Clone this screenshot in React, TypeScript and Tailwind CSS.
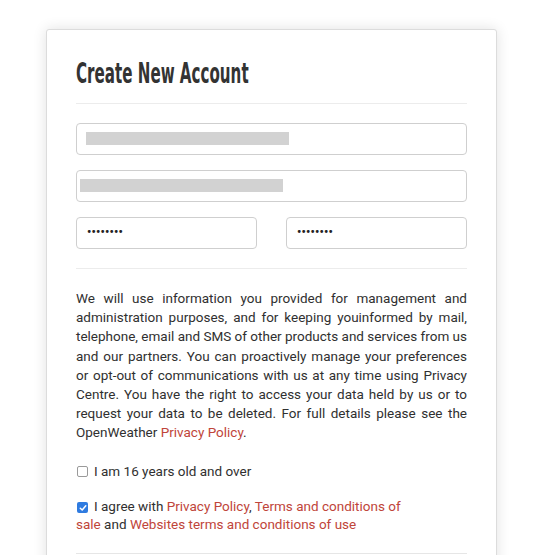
import React from "react";

const Field: React.FC<{ bar?: string; dots?: boolean }> = ({ bar, dots }) => {
  return (
    <div className="relative h-[32px] rounded-[4px] border border-[#cfcfcf] bg-white">
      {bar && <div className={`absolute top-[8px] h-[13px] bg-[#d2d2d2] ${bar}`} />}
      {dots && (
        <span className="absolute left-[10px] top-[5px] text-[12px] font-bold tracking-[0.2px] text-[#222]">
          ••••••••
        </span>
      )}
    </div>
  );
};

const Link: React.FC<{ children: React.ReactNode }> = ({ children }) => (
  <a className="text-[#c0453a]">{children}</a>
);

const lines = [
  "We will use information you provided for management and",
  "administration purposes, and for keeping youinformed by mail,",
  "telephone, email and SMS of other products and services from us",
  "and our partners. You can proactively manage your preferences",
  "or opt-out of communications with us at any time using Privacy",
  "Centre. You have the right to access your data held by us or to",
  "request your data to be deleted. For full details please see the",
];

export default function App() {
  return (
    <div className="min-h-[555px] bg-white pt-[29px] overflow-hidden">
      <div
        className="mx-[46px] w-[451px] h-[540px] rounded-t-[3px] border border-[#dcdcdc] bg-white px-[29px] pt-[28px] shadow-[0_0_14px_rgba(0,0,0,0.12)]"
        style={{ fontFamily: "Roboto, 'Liberation Sans', sans-serif" }}
      >
        <h1
          className="text-[28px] font-bold leading-[32px] text-[#333] origin-left scale-x-[0.6] whitespace-nowrap"
          style={{ fontFamily: "'DejaVu Sans Condensed', 'DejaVu Sans', sans-serif" }}
        >
          Create New Account
        </h1>
        <div className="mt-[13px] border-t border-[#ececec]" />

        <div className="mt-[19px] flex flex-col gap-[15px]">
          <Field bar="left-[9px] w-[203px]" />
          <Field bar="left-[3px] w-[203px]" />
          <div className="grid grid-cols-2 gap-[29px]">
            <Field dots />
            <Field dots />
          </div>
        </div>
        <div className="mt-[19px] border-t border-[#ececec]" />

        <p className="mt-[20px] text-[13.5px] leading-[19.2px] text-[#303030]">
          {lines.map((l) => (
            <span key={l} className="block text-justify [text-align-last:justify]">
              {l}
            </span>
          ))}
          <span className="block">
            OpenWeather <Link>Privacy Policy</Link>.
          </span>
        </p>

        <div className="mt-[19px] flex items-center gap-[6px] text-[13.5px] leading-[19px] text-[#303030]">
          <span className="ml-[1px] inline-block h-[11px] w-[11px] rounded-[2px] border border-[#9a9a9a] bg-white" />
          <span>I am 16 years old and over</span>
        </div>

        <div className="mt-[16px] text-[13.5px] leading-[18px] text-[#303030] w-[330px]">
          <span className="relative top-[1px] ml-[1px] mr-[6px] inline-flex h-[11px] w-[11px] items-center justify-center rounded-[2px] bg-[#2f7be0]">
            <svg width="8" height="8" viewBox="0 0 8 8">
              <path d="M1.3 4.2 L3.2 6 L6.8 1.8" fill="none" stroke="white" strokeWidth="1.5" strokeLinecap="round" strokeLinejoin="round" />
            </svg>
          </span>
          I agree with <Link>Privacy Policy</Link>, <Link>Terms and conditions of sale</Link> and{" "}
          <Link>Websites terms and conditions of use</Link>
        </div>

        <div className="mt-[20px] border-t border-[#e6e6e6]" />
      </div>
    </div>
  );
}
